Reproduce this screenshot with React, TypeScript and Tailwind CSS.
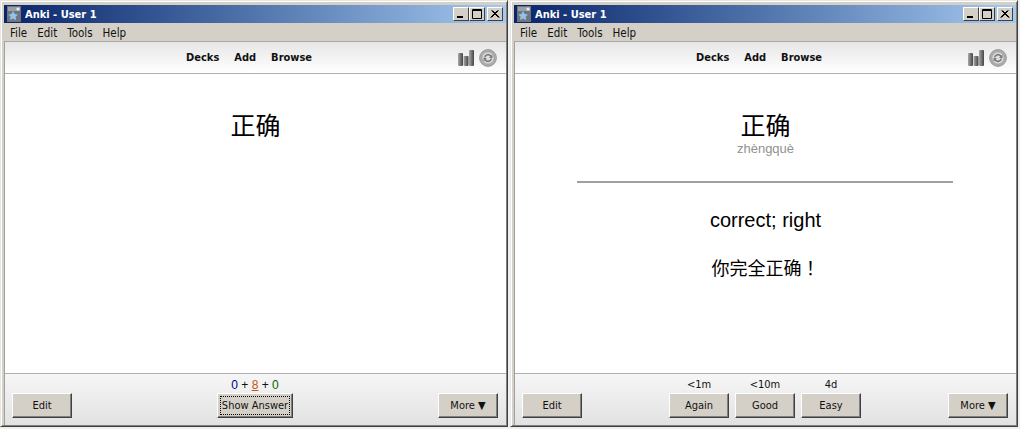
import React from "react";

const ui = "font-['DejaVu_Sans_Condensed','Liberation_Sans',sans-serif]";
const plain = "font-['Liberation_Sans','Noto_Sans',sans-serif]";
const cjk = "font-['Liberation_Sans','Noto_Sans_CJK_SC',sans-serif]";
const cjkTc = "font-['Noto_Sans_CJK_TC',sans-serif]";

function Btn({ children, w = "w-[60px]", focus = false }: { children: React.ReactNode; w?: string; focus?: boolean }) {
  return (
    <div className={`${w} h-[25px] bg-[#d4d0c8] border border-t-white border-l-white border-r-[#404040] border-b-[#404040] shadow-[inset_-1px_-1px_0_#808080] flex items-center justify-center text-[11px] text-[#111] whitespace-nowrap ${ui}`}>
      {focus ? (
        <span className="border border-dotted border-black w-[70px] h-[19px] pt-[1px] flex items-center justify-center">{children}</span>
      ) : <span className="pt-[2px]">{children}</span>}
    </div>
  );
}

function Caption({ kind }: { kind: "min" | "max" | "x" }) {
  return (
    <div className="w-[16px] h-[14px] bg-[#d4d0c8] border border-t-white border-l-white border-r-[#404040] border-b-[#404040] flex items-center justify-center">
      <svg width="12" height="10" viewBox="0 0 12 10" fill="none" stroke="#000" strokeWidth="1">
        {kind === "min" && <rect x="2" y="7" width="6" height="2" fill="#000" stroke="none" />}
        {kind === "max" && <path d="M1.500 .5h9v9h-9z M1.500 1.500h9" />}
        {kind === "x" && <path d="M2.500 1.500l7 7M3.500 1.500l7 7M9.500 1.500l-7 7M8.500 1.500l-7 7" />}
      </svg>
    </div>
  );
}

function AppIcon() {
  return (
    <svg width="16" height="16" viewBox="0 0 16 16" className="shrink-0">
      <rect x="1" y="0" width="14" height="16" fill="#70757d" />
      <rect x="2" y="1" width="12" height="4" fill="#9aa0a8" />
      <path d="M7 5l1.600 3 3.400.4-2.400 2.400.6 3.400L7 12.400 4 14l.6-3.400L2.200 8.400 5.500 8z" fill="#8fc4ee" />
      <circle cx="12" cy="3" r="1.600" fill="#e8edf3" />
    </svg>
  );
}

function StatsIcon() {
  return (
    <svg width="16" height="16" viewBox="0 0 16 16">
      <defs>
        <linearGradient id="barg" x1="0" x2="1" y1="0" y2="0">
          <stop offset="0" stopColor="#a8a8a8" />
          <stop offset="1" stopColor="#444444" />
        </linearGradient>
      </defs>
      <rect x="0" y="3" width="5" height="13" rx="1" fill="url(#barg)" />
      <rect x="5.500" y="6" width="5" height="10" rx="1" fill="url(#barg)" />
      <rect x="11" y="0" width="5" height="16" rx="1" fill="url(#barg)" />
    </svg>
  );
}

function SyncIcon() {
  return (
    <svg width="18" height="18" viewBox="0 0 18 18">
      <circle cx="9" cy="9" r="8.400" fill="#b0b0b0" stroke="#8a8a8a" strokeWidth="0.8" />
      <circle cx="9" cy="9" r="6.200" fill="#dedede" stroke="#9c9c9c" />
      <path d="M4.800 8.500A4.300 4.300 0 0 1 12.500 6.500l1-1v3.500H10l1.300-1.300A2.800 2.800 0 0 0 6.300 8.500z" fill="#7c7c7c" />
      <path d="M13.200 9.500A4.300 4.300 0 0 1 5.500 11.500l-1 1V9H8l-1.300 1.300a2.800 2.800 0 0 0 5 -.8z" fill="#7c7c7c" />
    </svg>
  );
}

function Window({ children, footer }: { children: React.ReactNode; footer: React.ReactNode }) {
  return (
    <div className="w-[508px] h-[427px] shrink-0 flex flex-col bg-[#d4d0c8] border border-t-[#e8e6e0] border-l-[#e8e6e0] border-r-[#404040] border-b-[#404040] pt-[3px] pl-[3px] pr-[1px] pb-[1px] shadow-[inset_1px_1px_0_#fff,inset_-1px_-1px_0_#808080]">
      <div className="h-[18px] mt-[1px] shrink-0 flex items-center pl-[2px] pr-[3px] bg-gradient-to-r from-[#0a246a] to-[#a6caf0]">
        <AppIcon />
        <span className={`ml-[3px] mt-[2px] text-white text-[11px] leading-[14px] font-bold ${ui}`}>Anki - User 1</span>
        <div className="ml-auto flex">
          <Caption kind="min" />
          <Caption kind="max" />
          <div className="w-[2px]" />
          <Caption kind="x" />
        </div>
      </div>
      <div className={`h-[18px] shrink-0 flex items-center gap-[10px] pl-[6px] pt-[4px] text-[11.5px] text-[#111] ${ui}`}>
        <span>File</span><span>Edit</span><span>Tools</span><span>Help</span>
      </div>
      <div className="flex-1 min-h-0 flex flex-col bg-white border-l border-[#a0a0a0]">
        <div className="h-[33px] shrink-0 flex items-center border-t border-b border-t-[#a8a8a8] border-b-[#b0b0b0] bg-gradient-to-b from-[#e6e6e6] to-white pr-[9px]">
          <div className={`ml-[181px] pt-[2px] flex gap-[15px] text-[11px] font-bold text-[#111] ${ui}`}>
            <span>Decks</span><span>Add</span><span>Browse</span>
          </div>
          <div className="ml-auto flex items-center gap-[5px]">
            <StatsIcon />
            <SyncIcon />
          </div>
        </div>
        <div className="flex-1 min-h-0 flex flex-col items-center">{children}</div>
        <div className="h-[52px] shrink-0 border-t border-[#b0b0b0] bg-gradient-to-b from-[#f6f6f6] to-[#e2e2e2] flex items-end pb-[7px] pl-[7px] pr-[8px]">
          {footer}
        </div>
      </div>
    </div>
  );
}

function Word() {
  return <div className={`mt-[34px] text-[25px] leading-[36px] text-black ${cjk}`}>正确</div>;
}

export default function App() {
  return (
    <div className="w-[1020px] h-[429px] flex gap-[2px] bg-[#efefef] overflow-hidden">
      <Window
        footer={
          <div className="w-full flex items-end justify-between">
            <Btn>Edit</Btn>
            <div className="flex flex-col items-center">
              <div className={`text-[12px] leading-[14px] mb-[1px] ${plain}`}>
                <span className="text-[#000080]">0</span>
                <span className="text-[#111]"> + </span>
                <span className="text-[#c35617] underline">8</span>
                <span className="text-[#111]"> + </span>
                <span className="text-[#006400]">0</span>
              </div>
              <Btn w="w-[76px]" focus>Show Answer</Btn>
            </div>
            <Btn>More ▼</Btn>
          </div>
        }
      >
        <Word />
      </Window>
      <Window
        footer={
          <div className="w-full flex items-end justify-between">
            <Btn>Edit</Btn>
            <div className="flex gap-[6px]">
              {[["<1m", "Again"], ["<10m", "Good"], ["4d", "Easy"]].map(([t, l]) => (
                <div key={l} className="flex flex-col items-center">
                  <div className={`text-[11px] leading-[14px] mb-[1px] text-[#111] ${ui}`}>{t}</div>
                  <Btn>{l}</Btn>
                </div>
              ))}
            </div>
            <Btn>More ▼</Btn>
          </div>
        }
      >
        <Word />
        <div className={`text-[13px] leading-[15px] text-[#909090] mt-[-3px] ${plain}`}>zhèngquè</div>
        <div className="w-[376px] h-[2px] bg-[#a0a0a0] mt-[25px] mr-[2px] shrink-0" />
        <div className={`mt-[23px] text-[20px] leading-[28px] text-black ${cjk}`}>correct; right</div>
        <div className={`mt-[21px] text-[18px] leading-[24px] text-black ${cjk}`}>
          你完全正确<span className={cjkTc}>！</span>
        </div>
      </Window>
    </div>
  );
}
